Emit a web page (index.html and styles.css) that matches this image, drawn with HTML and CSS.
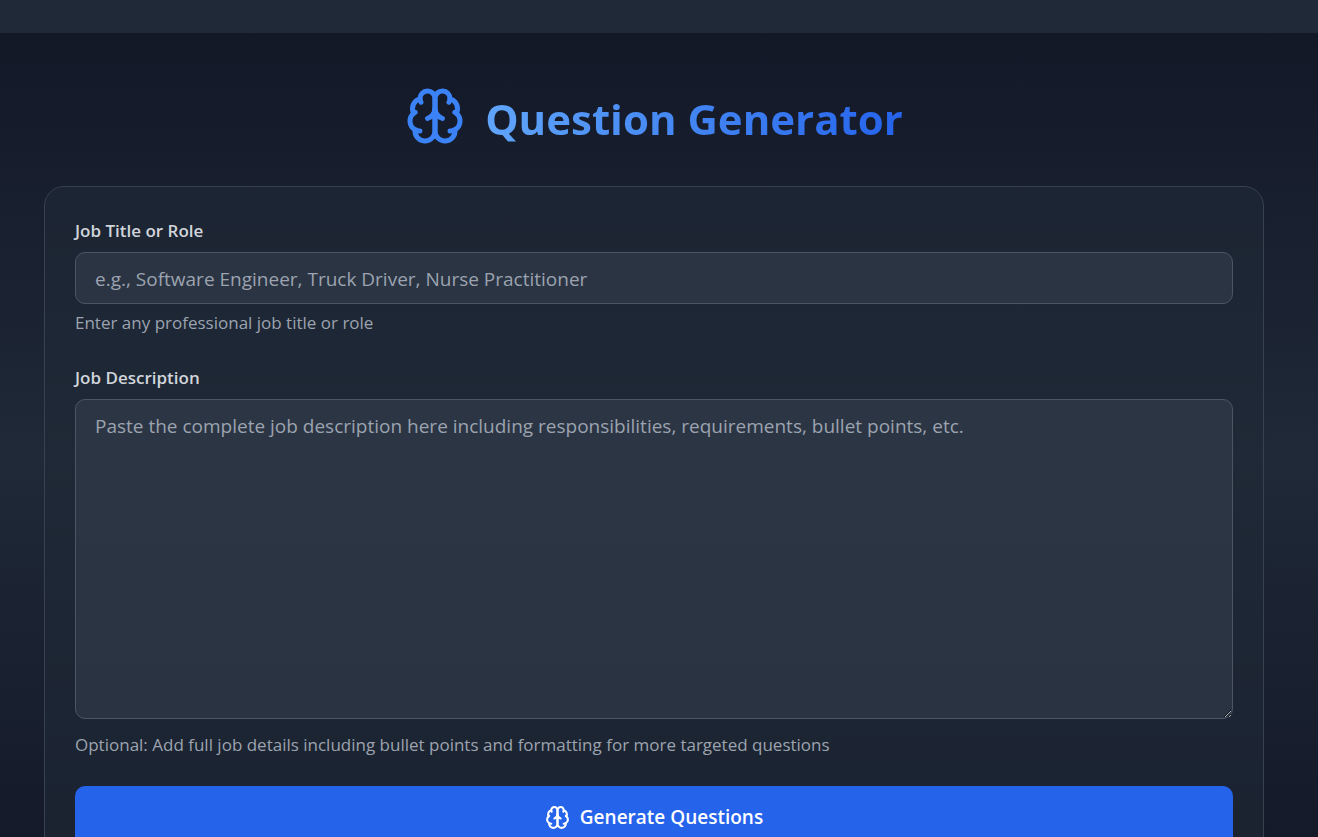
FILE: index.html
```html
<!DOCTYPE html>
<html lang="en">
<head>
  <meta charset="UTF-8" />
  <meta name="viewport" content="width=device-width, initial-scale=1" />
  <title>Question Generator</title>
  <link rel="stylesheet" href="styles.css">
</head>
<body>

<svg class="sprite" aria-hidden="true">
  <symbol id="brain" viewBox="0 0 24 24">
    <path d="M12 5a3 3 0 1 0-5.997.125 4 4 0 0 0-2.526 5.77 4 4 0 0 0 .556 6.588A4 4 0 1 0 12 18Z" />
    <path d="M12 5a3 3 0 1 1 5.997.125 4 4 0 0 1 2.526 5.77 4 4 0 0 1-.556 6.588A4 4 0 1 1 12 18Z" />
    <path d="M15 13a4.5 4.5 0 0 1-3-4 4.5 4.5 0 0 1-3 4" />
    <path d="M17.599 6.5a3 3 0 0 0 .399-1.375" />
    <path d="M6.003 5.125A3 3 0 0 0 6.401 6.5" />
    <path d="M3.477 10.896a4 4 0 0 1 .585-.396" />
    <path d="M19.938 10.5a4 4 0 0 1 .585.396" />
    <path d="M6 18a4 4 0 0 1-1.967-.516" />
    <path d="M19.967 17.484A4 4 0 0 1 18 18" />
  </symbol>
</svg>

<div class="topbar"></div>

<main class="page">
  <header class="hero">
    <svg class="icon hero-icon" aria-hidden="true"><use href="#brain" /></svg>
    <h1>Question Generator</h1>
  </header>

  <form class="card">
    <div class="field">
      <label for="job-title">Job Title or Role</label>
      <input id="job-title" type="text" placeholder="e.g., Software Engineer, Truck Driver, Nurse Practitioner">
      <p class="hint">Enter any professional job title or role</p>
    </div>

    <div class="field">
      <label for="job-description">Job Description</label>
      <textarea id="job-description" placeholder="Paste the complete job description here including responsibilities, requirements, bullet points, etc."></textarea>
      <p class="hint hint-low">Optional: Add full job details including bullet points and formatting for more targeted questions</p>
    </div>

    <button type="button" class="generate">
      <svg class="icon" aria-hidden="true"><use href="#brain" /></svg>
      Generate Questions
    </button>
  </form>
</main>

</body>
</html>
```

FILE: styles.css
```css
* {
  box-sizing: border-box;
}
body {
  margin: 0;
  background: #111827;
  color: #fff;
  font-family: 'Segoe UI', 'Open Sans', sans-serif;
}
.sprite {
  display: none;
}
.topbar {
  height: 33px;
  background: #1f2937;
}
.page {
  min-height: 100vh;
  padding: 40px 54px 0 44px;
  background: linear-gradient(to bottom, #131827, #1f2937, #131827);
}
.icon {
  width: 25px;
  height: 25px;
  fill: none;
  stroke: currentColor;
  stroke-width: 2;
  stroke-linecap: round;
  stroke-linejoin: round;
}
.hero {
  display: flex;
  justify-content: center;
  align-items: center;
  gap: 20px;
  margin-bottom: 27px;
}
.hero-icon {
  width: 60px;
  height: 60px;
  color: #3b82f6;
}
h1 {
  margin: 0;
  padding-top: 6px;
  font-size: 42px;
  font-weight: 700;
  line-height: 80px;
  color: transparent;
  background: linear-gradient(to right, #60a5fa, #2563eb);
  -webkit-background-clip: text;
  background-clip: text;
}
.card {
  padding: 30px;
  background: rgba(31, 41, 55, 0.6);
  border: 1px solid #374151;
  border-radius: 20px;
}
.field {
  margin-bottom: 29px;
}
label {
  display: block;
  margin-bottom: 9px;
  padding-top: 1px;
  color: #d1d5db;
  font-size: 17px;
  font-weight: 600;
  line-height: 25px;
}
input,
textarea {
  display: block;
  width: 100%;
  padding: 11px 19px 9px;
  background: rgba(55, 65, 81, 0.5);
  border: 1px solid #4b5563;
  border-radius: 10px;
  color: #fff;
  font-family: inherit;
  font-size: 19px;
  line-height: 30px;
}
input {
  height: 52px;
}
textarea {
  height: 320px;
  resize: vertical;
}
::placeholder {
  color: #9ca3af;
}
.hint {
  margin: 6px 0 0;
  color: #9ca3af;
  font-size: 17px;
  line-height: 25px;
}
.hint-low {
  margin-top: 13px;
}
.generate {
  display: flex;
  justify-content: center;
  align-items: center;
  gap: 10px;
  width: 100%;
  height: 62px;
  background: #2563eb;
  border: none;
  border-radius: 10px;
  color: #fff;
  font-family: inherit;
  font-size: 19px;
  font-weight: 600;
  cursor: pointer;
}
.generate:hover {
  background: #1d4ed8;
}
```
